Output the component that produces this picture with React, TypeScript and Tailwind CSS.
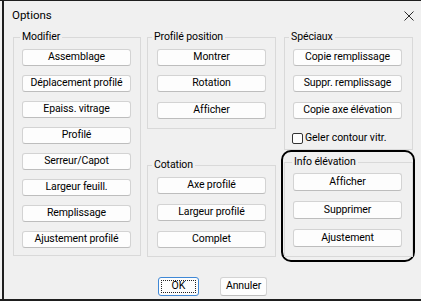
import React from "react";

function Btn({ label, h = "h-[17px]", extra = "" }: { label: string; h?: string; extra?: string }) {
  return (
    <div
      className={`${h} w-[109px] ${extra} flex items-center justify-center bg-[#fdfdfd] border border-[#d3d3d3] border-b-[#bdbdbd] rounded-[3px] text-[10.5px] tracking-[-0.1px] leading-none text-black`}
    >
      {label}
    </div>
  );
}

export default function App() {
  return (
    <div className="w-[421px] h-[301px] bg-[#f0f0f0] border-t border-b-2 border-[#1e1e1e] flex font-['Roboto','Liberation_Sans',sans-serif] text-black overflow-hidden">
      <div className="w-[2px] shrink-0" />
      <div className="flex-1 flex flex-col border-l-2 border-[#1e1e1e]">
        {/* title bar */}
        <div className="h-[28px] flex items-center justify-between pl-[8px] pr-[7px]">
          <span className="text-[11.5px] leading-none mt-[1px]">Options</span>
          <svg width="10" height="10" viewBox="0 0 10 10" className="mt-[1px]">
            <path d="M0.5 0.5 L9.5 9.5 M9.5 0.5 L0.5 9.5" stroke="#2b2b2b" strokeWidth="1" fill="none" />
          </svg>
        </div>

        {/* columns */}
        <div className="flex items-start pl-[9px]">
          {/* col 1 */}
          <fieldset className="w-[128px] border border-[#d9d9d9] pb-[7px] min-w-0">
            <legend className="ml-[6px] px-[2px] text-[10.5px] tracking-[-0.1px] leading-[16px]">Modifier</legend>
            <div className="pl-[8px] pt-[4px] flex flex-col gap-[9px]">
              <Btn label="Assemblage" />
              <Btn label="Déplacement profilé" />
              <Btn label="Epaiss. vitrage" />
              <Btn label="Profilé" />
              <Btn label="Serreur/Capot" />
              <Btn label="Largeur feuill." />
              <Btn label="Remplissage" />
              <Btn label="Ajustement profilé" />
            </div>
          </fieldset>

          {/* col 2 */}
          <div className="ml-[6px] w-[129px] flex flex-col">
            <fieldset className="w-[129px] border border-[#d9d9d9] pb-[9px] min-w-0">
              <legend className="ml-[4px] px-[2px] text-[10.5px] tracking-[-0.1px] leading-[16px]">Profilé position</legend>
              <div className="pl-[9px] pt-[4px] flex flex-col gap-[9px]">
                <Btn label="Montrer" />
                <Btn label="Rotation" />
                <Btn label="Afficher" extra="mt-[1px]" />
              </div>
            </fieldset>
            <fieldset className="mt-[28px] w-[129px] border border-[#d9d9d9] pb-[8px] min-w-0">
              <legend className="ml-[4px] px-[2px] text-[10.5px] tracking-[-0.1px] leading-[16px]">Cotation</legend>
              <div className="pl-[9px] pt-[4px] flex flex-col gap-[10px]">
                <Btn label="Axe profilé" />
                <Btn label="Largeur profilé" />
                <Btn label="Complet" />
              </div>
            </fieldset>
          </div>

          {/* col 3 */}
          <div className="ml-[8px] w-[129px] flex flex-col">
            <fieldset className="w-[129px] border border-[#d9d9d9] pb-[3px] min-w-0">
              <legend className="ml-[4px] px-[2px] text-[10.5px] tracking-[-0.1px] leading-[16px]">Spéciaux</legend>
              <div className="pl-[8px] pt-[4px] flex flex-col gap-[9px]">
                <Btn label="Copie remplissage" />
                <Btn label="Suppr. remplissage" />
                <Btn label="Copie axe élévation" extra="mt-[1px]" />
              </div>
              <div className="mt-[11px] pl-[7px] h-[16px] flex items-center gap-[2px]">
                <div className="w-[11px] h-[11px] border border-[#333333] rounded-[2px] bg-[#fdfdfd]" />
                <span className="text-[10.5px] tracking-[-0.05px] leading-none">Geler contour vitr.</span>
              </div>
            </fieldset>
            <div className="-ml-[3px] w-[134px] border-2 border-black rounded-[10px] pl-[1px] pt-[2px] pb-[3px]">
              <fieldset className="w-[129px] border border-[#d9d9d9] pb-[9px] min-w-0">
                <legend className="ml-[7px] px-[2px] text-[10.5px] tracking-[-0.1px] leading-[16px]">Info élévation</legend>
                <div className="pl-[8px] pt-[3px] flex flex-col gap-[10px]">
                  <Btn label="Afficher" h="h-[18px]" />
                  <Btn label="Supprimer" h="h-[18px]" />
                  <Btn label="Ajustement" h="h-[18px]" />
                </div>
              </fieldset>
            </div>
          </div>
        </div>

        {/* footer */}
        <div className="mt-[15px] flex justify-center gap-[21px]">
          <div className="w-[41px] h-[19px] border border-[#3f88d6] rounded-[3px] bg-[#fdfdfd] p-[2px]">
            <div className="w-full h-full border border-dotted border-[#222222] flex items-center justify-center text-[10.5px] leading-none">
              OK
            </div>
          </div>
          <div className="w-[47px] h-[19px] border border-[#d3d3d3] border-b-[#bdbdbd] rounded-[3px] bg-[#fdfdfd] flex items-center justify-center text-[10.5px] tracking-[-0.1px] leading-none">
            Annuler
          </div>
        </div>
      </div>
    </div>
  );
}
